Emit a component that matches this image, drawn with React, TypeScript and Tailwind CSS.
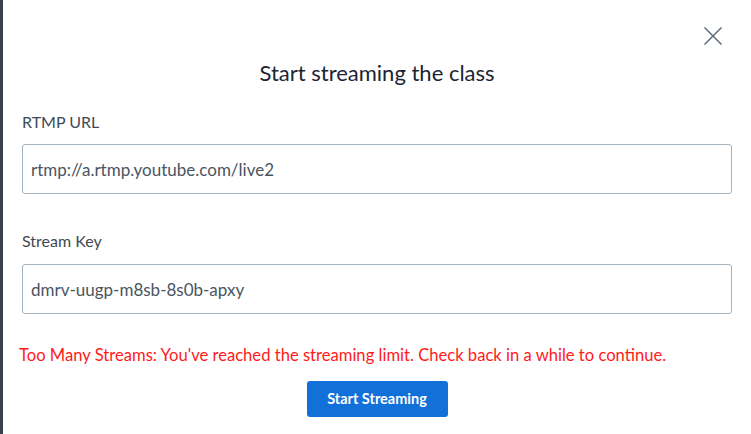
export default function App() {
  return (
    <div
      className="flex w-[751px] h-[434px] bg-white overflow-hidden"
      style={{ fontFamily: "Lato, 'Liberation Sans', sans-serif" }}
    >
      {/* backdrop edge */}
      <div className="w-[3px] shrink-0 bg-[#3a4047]" />

      <div className="flex-1 flex flex-col px-[19px]">
        {/* CLOSE */}
        <div className="flex justify-end pt-[27px] pr-[10px]">
          <button className="text-[#5f6b78]">
            <svg width="18" height="18" viewBox="0 0 18 18" fill="none" stroke="currentColor" strokeWidth="1.5">
              <path d="M0.5 0.5 L17.5 17.5 M17.5 0.5 L0.5 17.5" />
            </svg>
          </button>
        </div>

        {/* TITLE */}
        <h2 className="mt-[15px] text-center text-[22px] leading-[26px] text-[#1b2535]">
          Start streaming the class
        </h2>

        {/* RTMP URL */}
        <label className="mt-[26px] text-[16px] leading-[20px] text-[#3e4a56]">RTMP URL</label>
        <input
          readOnly
          value="rtmp://a.rtmp.youtube.com/live2"
          className="mt-[12px] h-[50px] w-full px-[8px] border border-[#a7b3bd] rounded-[3px] text-[17px] text-[#4a5561] outline-none"
        />

        {/* STREAM KEY */}
        <label className="mt-[37px] text-[16px] leading-[20px] text-[#3e4a56]">Stream Key</label>
        <input
          readOnly
          value="dmrv-uugp-m8sb-8s0b-apxy"
          className="mt-[13px] h-[50px] w-full px-[8px] border border-[#a7b3bd] rounded-[3px] text-[17px] text-[#4a5561] outline-none"
        />

        {/* ERROR */}
        <p className="mt-[31px] -ml-[3px] text-[16.6px] leading-[20px] text-[#ff1a1a] whitespace-nowrap">
          Too Many Streams: You've reached the streaming limit. Check back in a while to continue.
        </p>

        <div className="mt-[16px] flex justify-center">
          <button className="w-[141px] h-[36px] rounded-[3px] bg-[#1271d8] text-white text-[14.5px] font-bold">
            Start Streaming
          </button>
        </div>
      </div>
    </div>
  );
}
